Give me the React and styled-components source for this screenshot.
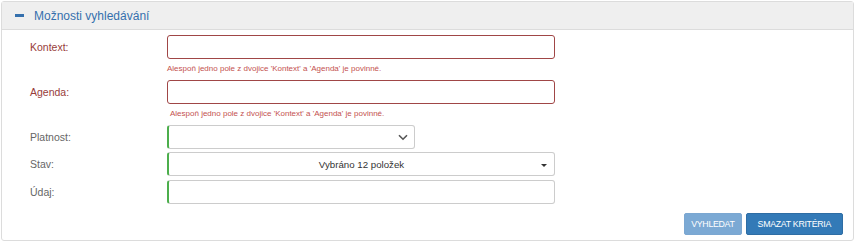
import React from 'react';
import styled, { createGlobalStyle } from 'styled-components';

const GlobalStyle = createGlobalStyle`
  body {
    margin: 1px;
    background: #fff;
    font-family: 'Liberation Sans', Arial, sans-serif;
  }
`;

const Panel = styled.div`
  width: 853px;
  height: 240px;
  border: 1px solid #dcdcdc;
  border-radius: 3px;
  box-sizing: border-box;
  display: flex;
  flex-direction: column;
`;

const Header = styled.div`
  height: 28px;
  background: #efefef;
  border-bottom: 1px solid #dcdcdc;
  display: flex;
  align-items: center;
  padding-left: 13px;
  gap: 10px;
  box-sizing: border-box;
`;

const MinusIcon = styled.span`
  width: 9px;
  height: 3px;
  background: #3570ad;
  display: inline-block;
`;

const Title = styled.span`
  font-size: 12px;
  color: #3570ad;
  line-height: 1;
`;

const Body = styled.div`
  flex: 1;
  padding: 5px 10px 5px 0;
  display: flex;
  flex-direction: column;
`;

const Row = styled.div`
  display: grid;
  grid-template-columns: 165px 1fr;
  align-items: ${p => (p.$top ? 'start' : 'center')};
  margin-bottom: ${p => p.$mb || 0}px;
`;

const Label = styled.label`
  padding-left: 28px;
  padding-top: ${p => (p.$top ? 6 : 0)}px;
  font-size: 10.5px;
  color: ${p => (p.$error ? '#983c3a' : '#666')};
`;

const Field = styled.div`
  display: flex;
  flex-direction: column;
`;

const Input = styled.div`
  width: ${p => p.$w}px;
  height: 24px;
  box-sizing: border-box;
  border: 1px solid ${p => (p.$error ? '#a04646' : '#ccc')};
  border-left: ${p => (p.$error ? '1px solid #a04646' : '2px solid #4cae4c')};
  border-radius: 3px;
  background: #fff;
  position: relative;
  display: flex;
  align-items: center;
  justify-content: center;
`;

const Help = styled.div`
  font-size: 8px;
  color: #c4524f;
  margin-top: 6px;
  margin-bottom: ${p => p.$mb}px;
  padding-left: ${p => p.$indent || 0}px;
  line-height: 8px;
`;

const SelectText = styled.span`
  font-size: 9.7px;
  color: #333;
`;

const Chevron = styled.svg`
  position: absolute;
  right: 6px;
  top: 8px;
`;

const Caret = styled.span`
  position: absolute;
  right: 7px;
  top: 11px;
  width: 0;
  height: 0;
  border-left: 3px solid transparent;
  border-right: 3px solid transparent;
  border-top: 3px solid #333;
`;

const Actions = styled.div`
  margin-top: auto;
  display: flex;
  justify-content: flex-end;
  gap: 4px;
`;

const Button = styled.button`
  height: 22px;
  padding: 0 ${p => p.$px}px;
  border: 1px solid ${p => (p.$disabled ? '#7ba7d1' : '#2e6da4')};
  border-radius: 2px;
  background: ${p => (p.$disabled ? '#7ba9d4' : '#337ab7')};
  color: #fff;
  font-family: 'Liberation Sans', Arial, sans-serif;
  font-size: 8.8px;
  letter-spacing: -0.3px;
  cursor: pointer;
`;

function App() {
  const helpText = "Alespoň jedno pole z dvojice 'Kontext' a 'Agenda' je povinné.";
  return (
    <>
      <GlobalStyle />
      <Panel>
        <Header>
          <MinusIcon />
          <Title>Možnosti vyhledávání</Title>
        </Header>
        <Body>
          <Row $top>
            <Label $error $top>Kontext:</Label>
            <Field>
              <Input $w={388} $error />
              <Help $mb={7}>{helpText}</Help>
            </Field>
          </Row>
          <Row $top>
            <Label $error $top>Agenda:</Label>
            <Field>
              <Input $w={388} $error />
              <Help $indent={3} $mb={7}>{helpText}</Help>
            </Field>
          </Row>
          <Row $mb={3}>
            <Label>Platnost:</Label>
            <Input $w={248}>
              <Chevron width="10" height="7" viewBox="0 0 10 7">
                <path d="M1 1.2 L5 5.2 L9 1.2" fill="none" stroke="#555" strokeWidth="1.6" />
              </Chevron>
            </Input>
          </Row>
          <Row $mb={4}>
            <Label>Stav:</Label>
            <Input $w={388}>
              <SelectText>Vybráno 12 položek</SelectText>
              <Caret />
            </Input>
          </Row>
          <Row>
            <Label>Údaj:</Label>
            <Input $w={388} />
          </Row>
          <Actions>
            <Button $disabled $px={6}>VYHLEDAT</Button>
            <Button $px={11}>SMAZAT KRITÉRIA</Button>
          </Actions>
        </Body>
      </Panel>
    </>
  );
}

export default App;
